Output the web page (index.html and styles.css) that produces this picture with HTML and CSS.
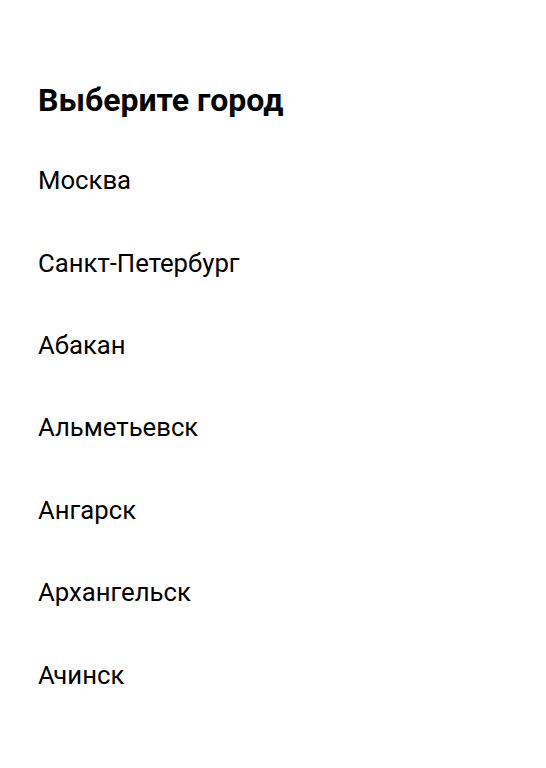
FILE: index.html
```html
<!DOCTYPE html>
<html lang="ru">
<head>
<meta charset="utf-8">
<link rel="stylesheet" href="styles.css">
</head>
<body>
<div class="page">
  <h1 class="title">Выберите город</h1>
  <ul class="cities">
    <li class="city">Москва</li>
    <li class="city">Санкт-Петербург</li>
    <li class="city">Абакан</li>
    <li class="city">Альметьевск</li>
    <li class="city">Ангарск</li>
    <li class="city">Архангельск</li>
    <li class="city">Ачинск</li>
  </ul>
</div>
</body>
</html>
```
FILE: styles.css
```css
html, body {
  margin: 0;
  padding: 0;
  background: #ffffff;
}
.page {
  font-family: Roboto, "Liberation Sans", sans-serif;
  color: #000;
  padding: 81px 38px 0 38px;
}
.title {
  margin: 0;
  font-size: 32px;
  font-weight: 700;
  line-height: 38px;
}
.cities {
  list-style: none;
  margin: 20px 0 0 0;
  padding: 0;
}
.city {
  height: 82.4px;
  display: flex;
  align-items: center;
  font-size: 25.7px;
  line-height: 30px;
}
```
